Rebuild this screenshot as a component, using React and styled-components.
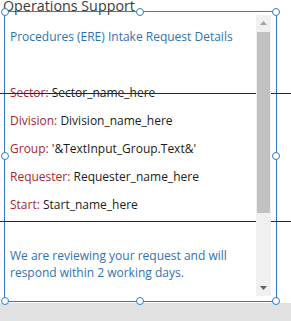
import styled, { createGlobalStyle } from "styled-components";

const GlobalStyle = createGlobalStyle`
  html, body {
    margin: 0;
    padding: 0;
    background: #ffffff;
  }
  body {
    font-family: "Open Sans", "Noto Sans", sans-serif;
  }
`;

const rows = [
  { label: "Sector", value: "Sector_name_here" },
  { label: "Division", value: "Division_name_here" },
  { label: "Group", value: "'&TextInput_Group.Text&'" },
  { label: "Requester", value: "Requester_name_here" },
  { label: "Start", value: "Start_name_here" },
];

const handles = [
  [5, 12], [140, 12], [276, 12],
  [5, 156], [276, 156],
  [5, 301], [140, 301], [276, 301],
];

const App = () => {
  return (
    <Stage>
      <GlobalStyle />
      <Title>
        <span>Operations Support</span>
      </Title>
      <Frame>
        <Content>
          <Heading>Procedures (ERE) Intake Request Details</Heading>
          <Fields>
            {rows.map((row) => (
              <Field key={row.label}>
                <Label>{row.label}:</Label> {row.value}
              </Field>
            ))}
          </Fields>
          <Note>
            We are reviewing your request and will
            <br />
            respond within 2 working days.
          </Note>
        </Content>
        <Scrollbar>
          <ArrowButton>
            <svg width="7" height="4" viewBox="0 0 7 4">
              <path d="M0 4 L3.5 0 L7 4 Z" fill="#a3a3a3" />
            </svg>
          </ArrowButton>
          <Thumb />
          <Track />
          <ArrowButton>
            <svg width="7" height="4" viewBox="0 0 7 4">
              <path d="M0 0 L7 0 L3.5 4 Z" fill="#606060" />
            </svg>
          </ArrowButton>
        </Scrollbar>
      </Frame>
      <Footer />
      <Guide $top={93} />
      <Guide $top={221} />
      {handles.map(([x, y]) => (
        <Handle key={`${x}-${y}`} style={{ left: x - 4, top: y - 4 }} />
      ))}
    </Stage>
  );
};

export default App;

const Stage = styled.div`
  position: relative;
  width: 291px;
  height: 321px;
  display: flex;
  flex-direction: column;
  overflow: hidden;
  background: #ffffff;
`;

const Title = styled.div`
  position: relative;
  z-index: 3;
  height: 11px;
  padding-left: 3px;
  font-size: 14.3px;
  line-height: 16px;
  color: #3b3b3b;
  white-space: nowrap;

  span {
    display: block;
    margin-top: -2px;
  }
`;

const Frame = styled.div`
  position: relative;
  margin-left: 4px;
  width: 273px;
  height: 291px;
  box-sizing: border-box;
  border: 1px solid #2f7bc4;
  display: flex;
`;

const Content = styled.div`
  flex: 1;
  padding: 17px 0 0 5px;
  font-size: 12px;
`;

const Heading = styled.div`
  color: #2f72b3;
  line-height: 16px;
  white-space: nowrap;
`;

const Fields = styled.div`
  margin-top: 34px;
  display: flex;
  flex-direction: column;
`;

const Field = styled.div`
  line-height: 28px;
  color: #1a1a1a;
  white-space: nowrap;
`;

const Label = styled.span`
  color: #a8262e;
`;

const Note = styled.div`
  margin-top: 28px;
  color: #2f72b3;
  line-height: 17px;
`;

const Scrollbar = styled.div`
  position: relative;
  z-index: 2;
  width: 15px;
  margin: 3px 5px 5px 0;
  background: #f0f0f0;
  display: flex;
  flex-direction: column;
`;

const ArrowButton = styled.div`
  height: 16px;
  display: flex;
  align-items: center;
  justify-content: center;
`;

const Thumb = styled.div`
  height: 181px;
  margin: 1px 1px 0;
  background: #c1c1c1;
`;

const Track = styled.div`
  flex: 1;
`;

const Footer = styled.div`
  flex: 1;
  margin-top: 1px;
  background: #e1e1e1;
`;

const Guide = styled.div`
  position: absolute;
  z-index: 1;
  left: 0;
  right: 0;
  top: ${(p) => p.$top}px;
  height: 1px;
  background: #1c2160;
`;

const Handle = styled.div`
  position: absolute;
  z-index: 4;
  width: 8px;
  height: 8px;
  box-sizing: border-box;
  border: 1px solid #2f7bc4;
  border-radius: 50%;
  background: #ffffff;
`;
